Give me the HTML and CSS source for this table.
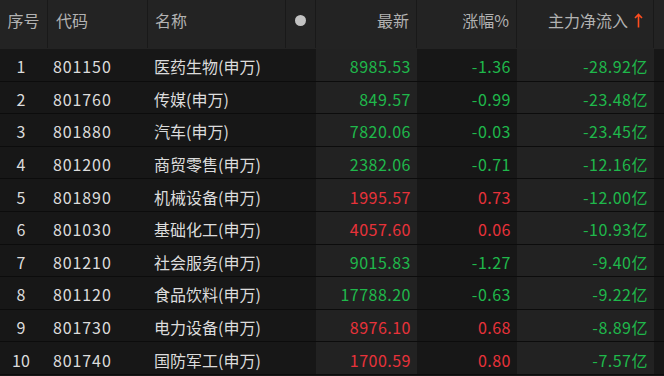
FILE: index.html
```html
<!DOCTYPE html>
<html lang="zh-CN">
<head>
<meta charset="utf-8">
<title>板块资金流</title>
<link rel="stylesheet" href="styles.css">
</head>
<body>
<div class="table">
  <div class="row head">
    <div class="c idx">序号</div>
    <div class="c code">代码</div>
    <div class="c name">名称</div>
    <div class="c dotc"><span class="dot"></span></div>
    <div class="c num">最新</div>
    <div class="c num">涨幅%</div>
    <div class="c num flow">主力净流入<svg class="arrow" width="9" height="15" viewBox="0 0 9 15"><path d="M4.5 1.5V14.5M1 5L4.5 1.5L8 5" fill="none" stroke="#ff4d1f" stroke-width="1.6"/></svg></div>
    <div class="c pad"></div>
  </div>
  <div class="row">
    <div class="c idx">1</div><div class="c code">801150</div><div class="c name">医药生物(申万)</div><div class="c dotc"></div>
    <div class="c num lt g">8985.53</div><div class="c num g">-1.36</div><div class="c num lt g">-28.92亿</div><div class="c pad"></div>
  </div>
  <div class="row">
    <div class="c idx">2</div><div class="c code">801760</div><div class="c name">传媒(申万)</div><div class="c dotc"></div>
    <div class="c num lt g">849.57</div><div class="c num g">-0.99</div><div class="c num lt g">-23.48亿</div><div class="c pad"></div>
  </div>
  <div class="row">
    <div class="c idx">3</div><div class="c code">801880</div><div class="c name">汽车(申万)</div><div class="c dotc"></div>
    <div class="c num lt g">7820.06</div><div class="c num g">-0.03</div><div class="c num lt g">-23.45亿</div><div class="c pad"></div>
  </div>
  <div class="row">
    <div class="c idx">4</div><div class="c code">801200</div><div class="c name">商贸零售(申万)</div><div class="c dotc"></div>
    <div class="c num lt g">2382.06</div><div class="c num g">-0.71</div><div class="c num lt g">-12.16亿</div><div class="c pad"></div>
  </div>
  <div class="row">
    <div class="c idx">5</div><div class="c code">801890</div><div class="c name">机械设备(申万)</div><div class="c dotc"></div>
    <div class="c num lt r">1995.57</div><div class="c num r">0.73</div><div class="c num lt g">-12.00亿</div><div class="c pad"></div>
  </div>
  <div class="row">
    <div class="c idx">6</div><div class="c code">801030</div><div class="c name">基础化工(申万)</div><div class="c dotc"></div>
    <div class="c num lt r">4057.60</div><div class="c num r">0.06</div><div class="c num lt g">-10.93亿</div><div class="c pad"></div>
  </div>
  <div class="row">
    <div class="c idx">7</div><div class="c code">801210</div><div class="c name">社会服务(申万)</div><div class="c dotc"></div>
    <div class="c num lt g">9015.83</div><div class="c num g">-1.27</div><div class="c num lt g">-9.40亿</div><div class="c pad"></div>
  </div>
  <div class="row">
    <div class="c idx">8</div><div class="c code">801120</div><div class="c name">食品饮料(申万)</div><div class="c dotc"></div>
    <div class="c num lt g">17788.20</div><div class="c num g">-0.63</div><div class="c num lt g">-9.22亿</div><div class="c pad"></div>
  </div>
  <div class="row">
    <div class="c idx">9</div><div class="c code">801730</div><div class="c name">电力设备(申万)</div><div class="c dotc"></div>
    <div class="c num lt r">8976.10</div><div class="c num r">0.68</div><div class="c num lt g">-8.89亿</div><div class="c pad"></div>
  </div>
  <div class="row">
    <div class="c idx">10</div><div class="c code">801740</div><div class="c name">国防军工(申万)</div><div class="c dotc"></div>
    <div class="c num lt r">1700.59</div><div class="c num r">0.80</div><div class="c num lt g">-7.57亿</div><div class="c pad"></div>
  </div>
</div>
</body>
</html>
```
FILE: styles.css
```css
html, body {
  margin: 0;
  padding: 0;
  background: #171717;
  overflow: hidden;
}
.table {
  width: 664px;
  font-family: "Noto Sans CJK SC", "Noto Sans", sans-serif;
  font-size: 16px;
  color: #dcdcdc;
}
.row {
  display: grid;
  grid-template-columns: 48px 100px 138px 30px 101px 100px 137px 10px;
  height: 31.6px;
  border-bottom: 1px solid #0c0c0c;
  background: #171717;
}
.c {
  display: flex;
  align-items: center;
  padding-top: 3px;
  box-sizing: border-box;
  white-space: nowrap;
}
.idx {
  justify-content: center;
  padding-right: 6px;
}
.code {
  padding-left: 5px;
  letter-spacing: 0.9px;
}
.name {
  padding-left: 6px;
}
.num {
  justify-content: flex-end;
  padding-right: 6px;
  letter-spacing: 0.5px;
}
.lt {
  background: #222222;
}
.g { color: #1fb84b; }
.r { color: #e8323a; }

.head {
  height: 49px;
  border-bottom: none;
  background: #232323;
  color: #b2b2b2;
}
.head .c {
  border-right: 1px solid #191919;
  padding-top: 0;
  padding-bottom: 8px;
  margin-bottom: 1px;
  letter-spacing: 0;
}
.head .code { padding-left: 8px; }
.head .name { padding-left: 7px; }
.head .idx { padding-right: 0; }
.head .num { padding-right: 7px; }
.head .pad { border-right: none; }
.head .flow { padding-right: 10px; }
.arrow {
  margin-left: 6px;
  margin-top: 1px;
}
.dotc {
  justify-content: center;
}
.dot {
  width: 11px;
  height: 11px;
  border-radius: 50%;
  background: #c2c2c2;
  margin-right: 0;
}
```
